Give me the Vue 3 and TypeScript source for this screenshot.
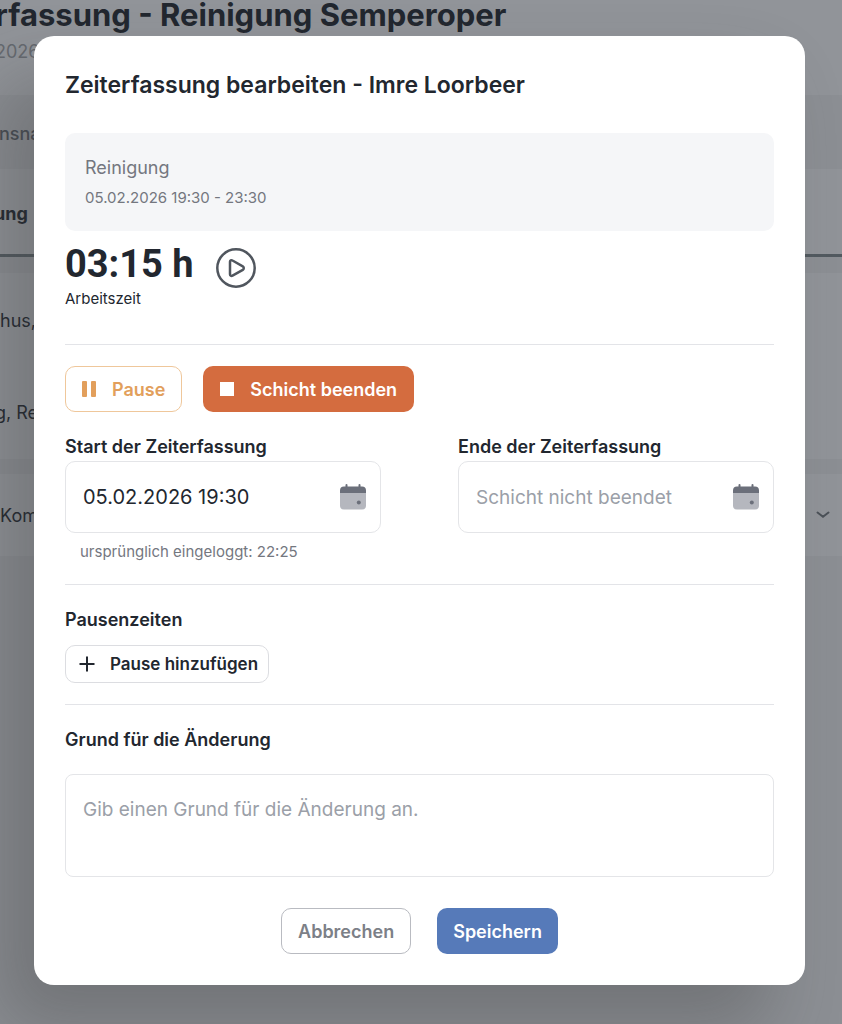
<script setup lang="ts">
import { ref } from 'vue'

interface DateField {
  id: string
  label: string
  value: string
  placeholder: string
  hint?: string
}

const fields = ref<DateField[]>([
  {
    id: 'start',
    label: 'Start der Zeiterfassung',
    value: '05.02.2026 19:30',
    placeholder: '',
    hint: 'ursprünglich eingeloggt: 22:25',
  },
  {
    id: 'end',
    label: 'Ende der Zeiterfassung',
    value: '',
    placeholder: 'Schicht nicht beendet',
  },
])
const reason = ref('')
</script>

<template>
  <div class="screen">
    <div class="page">
      <h1 class="page-title">rfassung - Reinigung Semperoper</h1>
      <p class="page-date">2026</p>
      <div class="band head">nsna</div>
      <div class="row group">ung</div>
      <div class="row people">
        <span>hus,</span>
        <span>g, Re</span>
      </div>
      <div class="row last">
        <span>Kom</span>
        <svg class="chevron" viewBox="0 0 14 8" aria-hidden="true"><path d="M1.5 1.5 7 5.7l5.500-4.200" /></svg>
      </div>
    </div>

    <div class="overlay">
      <form class="modal" role="dialog" aria-labelledby="dialog-title" @submit.prevent>
        <h2 id="dialog-title" class="title">Zeiterfassung bearbeiten - Imre Loorbeer</h2>

        <div class="shift">
          <div class="shift-name">Reinigung</div>
          <div class="shift-time">05.02.2026 19:30 - 23:30</div>
        </div>

        <div class="timer">
          <div class="timer-text">
            <div class="time">03:15 h</div>
            <div class="time-label">Arbeitszeit</div>
          </div>
          <button type="button" class="play" aria-label="Starten">
            <svg viewBox="0 0 40 40" aria-hidden="true">
              <circle cx="20" cy="20" r="18.700" />
              <path d="M14 13.800v12.400c0 1.400 1.200 2.200 2.500 1.500l10.300-5.800c1.300-.8 1.300-2.900 0-3.600l-10.300-5.800c-1.300-.8-2.500 0-2.500 1.300Z" />
            </svg>
          </button>
        </div>

        <div class="shift-actions">
          <button type="button" class="btn pause">
            <svg viewBox="0 0 14 16" width="14" height="16" aria-hidden="true">
              <rect x="0" y="0" width="5" height="16" rx="1" /><rect x="9" y="0" width="5" height="16" rx="1" />
            </svg>
            Pause
          </button>
          <button type="button" class="btn stop">
            <svg viewBox="0 0 14 14" width="14" height="14" aria-hidden="true"><rect width="14" height="14" /></svg>
            Schicht beenden
          </button>
        </div>

        <div class="fields">
          <div v-for="field in fields" :key="field.id" class="field">
            <label class="label" :for="field.id">{{ field.label }}</label>
            <div class="date-box">
              <input :id="field.id" v-model="field.value" type="text" :placeholder="field.placeholder" />
              <button type="button" class="calendar" aria-label="Kalender öffnen">
                <svg viewBox="0 0 26 26" aria-hidden="true">
                  <path class="cal-body" d="M0 8h26v13.500a4 4 0 0 1-4 4h-18A4 4 0 0 1 0 21.500Z" />
                  <path class="cal-top" d="M0 9V6.500a4 4 0 0 1 4-4H5.500V1a1 1 0 0 1 2 0v1.500h11V1a1 1 0 0 1 2 0v1.500h1.500A4 4 0 0 1 26 6.500V9Z" />
                  <circle class="cal-top" cx="18.800" cy="18.500" r="2" />
                </svg>
              </button>
            </div>
            <div v-if="field.hint" class="hint">{{ field.hint }}</div>
          </div>
        </div>

        <section class="section">
          <h3 class="label">Pausenzeiten</h3>
          <button type="button" class="btn add">
            <svg viewBox="0 0 16 16" width="16" height="16" aria-hidden="true"><path d="M8 0.500v15M0.500 8h15" /></svg>
            Pause hinzufügen
          </button>
        </section>

        <section class="section">
          <label class="label" for="reason">Grund für die Änderung</label>
          <textarea id="reason" v-model="reason" placeholder="Gib einen Grund für die Änderung an."></textarea>
        </section>

        <div class="footer">
          <button type="button" class="btn cancel">Abbrechen</button>
          <button type="submit" class="btn save">Speichern</button>
        </div>
      </form>
    </div>
  </div>
</template>

<style>
body {
  background: #8c8f94;
}
</style>

<style scoped>
.screen,
.screen * {
  box-sizing: border-box;
}
.screen {
  display: grid;
  min-height: 100vh;
  overflow: hidden;
  font-family: Inter, 'Liberation Sans', sans-serif;
  color: #22272f;
}
.page,
.overlay {
  grid-area: 1 / 1;
  min-width: 0;
}
h1,
h2,
h3,
p {
  margin: 0;
}
button,
input,
textarea {
  font: inherit;
  color: inherit;
}
button {
  padding: 0;
  background: none;
  border: 0;
  cursor: pointer;
}
svg {
  display: block;
  flex: none;
}

.page {
  background: #8c8f94;
  font-size: 18px;
  white-space: nowrap;
}
.page-title {
  height: 36px;
  margin-top: -4px;
  font-size: 31px;
  line-height: 38px;
  font-weight: 700;
  text-indent: -5px;
  background: #919499;
}
.page-date {
  height: 63px;
  padding-top: 9px;
  line-height: 22px;
  text-indent: -5px;
  color: #65696f;
  background: #919499;
}
.band {
  height: 74px;
  line-height: 78px;
  font-weight: 500;
  text-indent: -1px;
  color: #484d54;
}
.row {
  background: #919499;
}
.group {
  height: 88px;
  line-height: 90px;
  font-weight: 700;
  text-indent: -6px;
  border-bottom: 3px solid #525a60;
}
.people {
  display: flex;
  flex-direction: column;
  gap: 70px;
  height: 186px;
  margin-top: 16px;
  padding-top: 37px;
  line-height: 22px;
}
.last {
  display: flex;
  align-items: center;
  justify-content: space-between;
  height: 82px;
  margin-top: 15px;
  padding-right: 12px;
}
.people span + span {
  text-indent: -5px;
}
.chevron {
  width: 14px;
  height: 8px;
  fill: none;
  stroke: #4b5158;
  stroke-width: 2;
  stroke-linecap: round;
}

.overlay {
  z-index: 1;
  padding: 36px 37px 39px 34px;
}
.modal {
  padding: 31px;
  background: #fff;
  border-radius: 20px;
  box-shadow: -36px 44px 72px rgba(60, 58, 60, 0.32);
}
.title {
  margin-bottom: 30px;
  font-size: 23px;
  line-height: 36px;
  font-weight: 600;
}
.shift {
  padding: 20px 20px 18px;
  border-radius: 10px;
  background: #f5f6f8;
  color: #74777f;
  line-height: 30px;
}
.shift-name {
  font-size: 18px;
}
.shift-time {
  font-size: 15px;
}
.timer {
  display: flex;
  align-items: flex-start;
  gap: 22px;
  padding: 8px 0 35px;
  border-bottom: 1px solid #e3e4e8;
}
.time {
  font-family: Roboto, 'Liberation Sans', sans-serif;
  font-size: 38px;
  line-height: 50px;
  font-weight: 700;
}
.time-label {
  font-size: 15px;
  line-height: 20px;
}
.play {
  width: 40px;
  height: 40px;
  margin-top: 9px;
}
.play svg {
  width: 40px;
  height: 40px;
  fill: none;
  stroke: #50565e;
  stroke-width: 2.500;
}
.shift-actions {
  display: flex;
  gap: 21px;
  margin: 21px 0 24px;
}
.btn {
  display: inline-flex;
  align-items: center;
  height: 46px;
  padding: 0 15px;
  border: 1px solid transparent;
  border-radius: 10px;
  font-size: 18px;
  font-weight: 600;
  white-space: nowrap;
}
.pause,
.stop {
  gap: 16px;
  padding: 0 16px;
}
.pause {
  color: #e29f5c;
  border-color: #efc79b;
}
.pause svg,
.stop svg {
  fill: currentColor;
}
.stop {
  color: #fff;
  background: #d46c3f;
}
.fields {
  display: grid;
  grid-template-columns: 1fr 1fr;
  gap: 77px;
  padding-bottom: 21px;
  border-bottom: 1px solid #e3e4e8;
}
.field {
  min-width: 0;
}
.label {
  display: block;
  font-size: 18px;
  line-height: 22px;
  font-weight: 600;
}
.date-box {
  display: flex;
  align-items: center;
  height: 72px;
  margin-top: 3px;
  padding: 0 14px 0 17px;
  border: 1px solid #e4e5e8;
  border-radius: 10px;
}
.date-box input {
  flex: 1;
  min-width: 0;
  padding: 0;
  border: 0;
  outline: 0;
  background: none;
  font-size: 20px;
}
input::placeholder,
textarea::placeholder {
  color: #9b9fa8;
  font-size: 19px;
  opacity: 1;
}
.calendar,
.calendar svg {
  width: 26px;
  height: 26px;
}
.cal-body {
  fill: #b5b7be;
}
.cal-top {
  fill: #6b6f7a;
}
.hint {
  margin-top: 8px;
  padding-left: 15px;
  font-size: 15px;
  line-height: 22px;
  color: #74777f;
}
.section {
  padding-top: 24px;
}
.add {
  height: 38px;
  margin: 14px 0 21px;
  padding: 0 10px 0 13px;
  gap: 15px;
  font-size: 17px;
  border-color: #dcdde1;
}
.add svg {
  stroke: currentColor;
  stroke-width: 2;
}
.section + .section {
  border-top: 1px solid #e3e4e8;
}
textarea {
  display: block;
  width: 100%;
  height: 103px;
  margin-top: 23px;
  padding: 22px 17px;
  border: 1px solid #e4e5e8;
  border-radius: 8px;
  outline: 0;
  resize: none;
  background: none;
  font-size: 19px;
  line-height: 26px;
}
.footer {
  display: flex;
  justify-content: center;
  gap: 26px;
  margin-top: 31px;
}
.cancel {
  padding: 0 16px;
  color: #7c8087;
  border-color: #b9bbc1;
}
.save {
  color: #fff;
  background: #567ab9;
}
</style>
